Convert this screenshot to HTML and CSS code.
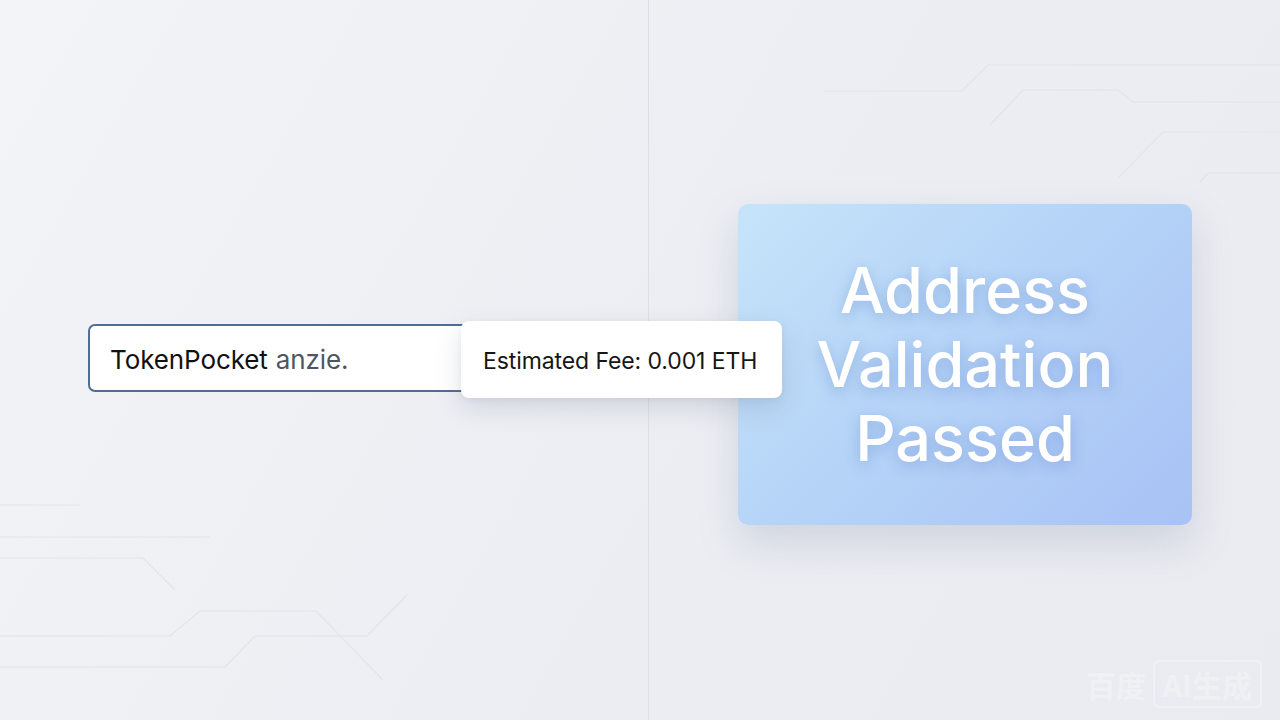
FILE: index.html
```html
<!DOCTYPE html>
<html lang="en">
<head>
    <meta charset="UTF-8">
    <meta name="viewport" content="width=device-width, initial-scale=1.0">
    <title>Address Check</title>
    <link rel="stylesheet" href="styles.css">
</head>
<body>
    <div class="stage">
        <!-- circuit traces behind everything -->
        <svg class="traces" width="1280" height="720" viewBox="0 0 1280 720">
            <g fill="none" stroke="#e1e4ea" stroke-width="1.2">
                <polyline points="823,91 962,91 988,65 1280,65"/>
                <polyline points="990,125 1023,90 1118,90 1133,102 1280,102"/>
                <polyline points="1118,178 1163,132 1280,132"/>
                <polyline points="1200,182 1208,173 1280,173"/>
                <polyline points="0,505 80,505"/>
                <polyline points="0,537 210,537"/>
                <polyline points="0,558 143,558 175,590"/>
                <polyline points="0,636 170,636 200,611 316,611 383,680"/>
                <polyline points="0,667 225,667 255,636 367,636 407,595"/>
            </g>
        </svg>
        <div class="divider"></div>

        <div class="field">
            <div class="address-input">
                <span class="typed">TokenPocket</span>
                <span class="rest">anzie.</span>
            </div>
            <div class="fee-card">Estimated Fee: 0.001 ETH</div>
        </div>

        <div class="result-card">
            <h2>Address<br>Validation<br>Passed</h2>
        </div>

        <div class="mark">百度 <span>AI生成</span></div>
    </div>
</body>
</html>
```

FILE: styles.css
```css
* {
    box-sizing: border-box;
}

body {
    margin: 0;
    font-family: Inter, "Noto Sans", sans-serif;
    background: linear-gradient(120deg, #f3f4f7 0%, #eceef3 50%, #e9ebf0 100%);
}

.stage {
    position: relative;
    width: 1280px;
    height: 720px;
    overflow: hidden;
    display: flex;
    align-items: center;
    padding-left: 88px;
}

.traces {
    position: absolute;
    left: 0;
    top: 0;
}

.divider {
    position: absolute;
    left: 648px;
    top: 0;
    width: 1px;
    height: 720px;
    background: #dcdfe5;
}

.field {
    position: relative;
    margin-top: -4px;
    z-index: 2;
}

.address-input {
    width: 390px;
    height: 68px;
    display: flex;
    align-items: center;
    gap: 8px;
    padding: 3px 0 0 20px;
    background: #fff;
    border: 2px solid #4f6e93;
    border-radius: 7px;
    font-size: 26px;
    letter-spacing: -0.1px;
}

.typed {
    color: #111;
}

.rest {
    color: #50565f;
}

.fee-card {
    position: absolute;
    left: 373px;
    top: -3px;
    width: 321px;
    height: 77px;
    display: flex;
    align-items: center;
    padding: 2px 0 0 22px;
    background: #fff;
    border-radius: 8px;
    box-shadow: 0 10px 26px rgba(90, 100, 125, 0.18), 0 2px 6px rgba(90, 100, 125, 0.08);
    font-size: 23px;
    letter-spacing: -0.1px;
    color: #161616;
    white-space: nowrap;
}

.result-card {
    margin-left: 260px;
    margin-top: 8px;
    width: 454px;
    height: 321px;
    display: flex;
    align-items: center;
    justify-content: center;
    border-radius: 10px;
    background: linear-gradient(135deg, #c6e4f9 0%, #b6d4f7 45%, #a8c2f5 100%);
    box-shadow: 0 18px 40px rgba(110, 125, 160, 0.22);
}

.result-card h2 {
    margin: 0;
    text-align: center;
    color: #fff;
    font-size: 63px;
    font-weight: 500;
    line-height: 74px;
    text-shadow: 0 4px 14px rgba(70, 110, 190, 0.35);
}

.mark {
    position: absolute;
    right: 18px;
    bottom: 14px;
    font-family: "Noto Sans CJK SC", sans-serif;
    font-size: 30px;
    font-weight: 700;
    color: rgba(255, 255, 255, 0.3);
}

.mark span {
    border: 2px solid rgba(255, 255, 255, 0.3);
    border-radius: 6px;
    padding: 0 8px;
}
```
